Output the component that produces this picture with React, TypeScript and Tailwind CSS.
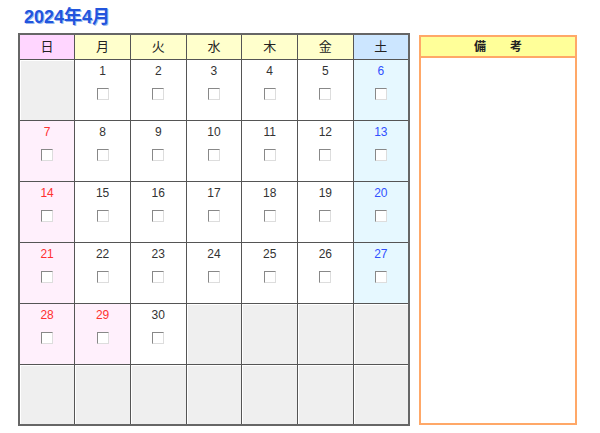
const days = ["日", "月", "火", "水", "木", "金", "土"];

// April 2024 starts on a Monday; 29th is a holiday
const weeks: (number | null)[][] = [
  [null, 1, 2, 3, 4, 5, 6],
  [7, 8, 9, 10, 11, 12, 13],
  [14, 15, 16, 17, 18, 19, 20],
  [21, 22, 23, 24, 25, 26, 27],
  [28, 29, 30, null, null, null, null],
  [null, null, null, null, null, null, null],
];
const holidays = [29];

const headBg = ["bg-[#ffd6ff]", "bg-[#ffffcc]", "bg-[#ffffcc]", "bg-[#ffffcc]", "bg-[#ffffcc]", "bg-[#ffffcc]", "bg-[#cce6ff]"];

function CheckBox() {
  return (
    <span className="mx-auto block h-[12px] w-[12px] border border-t-[#888] border-l-[#888] border-b-[#ddd] border-r-[#ddd] bg-white" />
  );
}

function DayCell({ day, col }: { day: number | null; col: number }) {
  if (day === null) {
    return <td className="border border-[#555] bg-[#efefef] shadow-[inset_1px_1px_0_#fff]" />;
  }
  const red = col === 0 || holidays.includes(day);
  const bg = red ? "bg-[#fff0fc]" : col === 6 ? "bg-[#e6f8ff]" : "bg-white";
  const color = red ? "text-[#ff3030]" : col === 6 ? "text-[#3050ff]" : "text-[#333333]";
  return (
    <td className={`border border-[#555] align-top ${bg}`}>
      <div className={`mt-[3px] text-center text-[12px] leading-[16px] ${color}`}>{day}</div>
      <div className="mt-[9px]">
        <CheckBox />
      </div>
    </td>
  );
}

export default function App() {
  return (
    <div
      className="relative h-[433px] w-[600px] bg-white"
      style={{ fontFamily: '"Liberation Sans", "Noto Sans CJK JP", sans-serif' }}
    >
      <h1 className="pl-[24px] pt-[6px] text-[18px] font-bold leading-[23px] text-[#2255dd] [text-shadow:1px_1px_0_#9bb8f0]">
        2024年4月
      </h1>
      <div className="mt-[4px] flex items-start">
        <table className="ml-[18px] w-[392px] table-fixed border-collapse border-2 border-[#666]">
          <thead>
            <tr className="h-[25px]">
              {days.map((d, i) => (
                <th key={d} className={`border border-[#555] text-center text-[13px] font-normal text-[#222] ${headBg[i]}`}>
                  {d}
                </th>
              ))}
            </tr>
          </thead>
          <tbody>
            {weeks.map((w, r) => (
              <tr key={r} className="h-[61px]">
                {w.map((d, c) => (
                  <DayCell key={c} day={d} col={c} />
                ))}
              </tr>
            ))}
          </tbody>
        </table>
        <div className="ml-[9px] mt-[2px] flex h-[390px] w-[158px] flex-col border-2 border-[#ffa868]">
          <div className="flex h-[21px] items-center justify-center border-b-2 border-[#ffa868] bg-[#ffff99] text-[12px] font-bold text-[#222]">
            備　　考
          </div>
          <div className="flex-1 bg-white" />
        </div>
      </div>
    </div>
  );
}
